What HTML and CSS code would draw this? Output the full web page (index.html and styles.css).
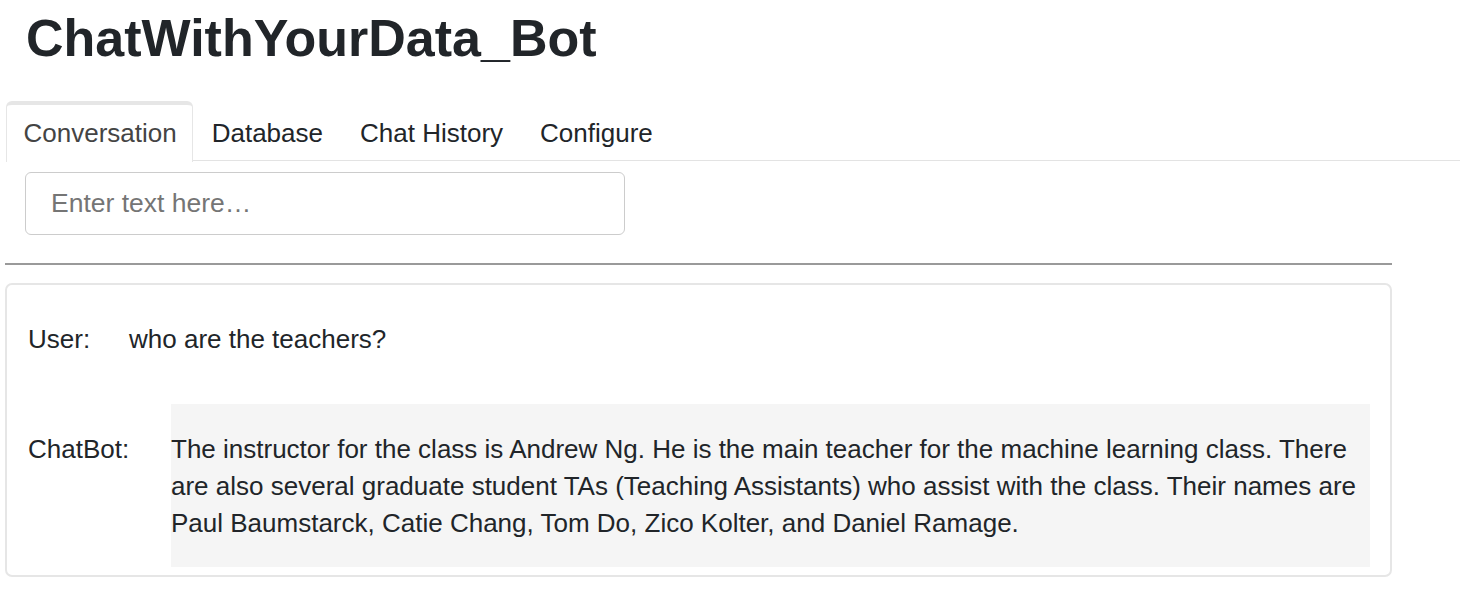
FILE: index.html
```html
<!DOCTYPE html>
<html>
<head>
<meta charset="utf-8">
<link rel="stylesheet" href="styles.css">
</head>
<body>
<h1 class="title">ChatWithYourData_Bot</h1>
<div class="tabs">
  <div class="tab active">Conversation</div>
  <div class="tab">Database</div>
  <div class="tab">Chat History</div>
  <div class="tab">Configure</div>
</div>
<div class="panel">
  <div class="input-wrap">
    <input class="input" type="text" placeholder="Enter text here…">
  </div>
  <div class="divider"></div>
  <div class="card">
    <div class="row user-row">
      <div class="label user-label">User:</div>
      <div class="msg">who are the teachers?</div>
    </div>
    <div class="row bot-row">
      <div class="label bot-label">ChatBot:</div>
      <div class="msg bot-msg">The instructor for the class is Andrew Ng. He is the main teacher for the machine learning class. There are also several graduate student TAs (Teaching Assistants) who assist with the class. Their names are Paul Baumstarck, Catie Chang, Tom Do, Zico Kolter, and Daniel Ramage.</div>
    </div>
  </div>
</div>
</body>
</html>
```
FILE: styles.css
```css
html, body {
  margin: 0;
  padding: 0;
  background: #ffffff;
  font-family: "Liberation Sans", Arial, sans-serif;
  color: #212529;
}
body {
  width: 1460px;
  height: 603px;
  overflow: hidden;
}
.title {
  margin: 0;
  padding: 7px 0 0 26px;
  height: 93px;
  box-sizing: border-box;
  font-size: 52px;
  font-weight: bold;
  line-height: 62px;
  color: #212529;
}
.tabs {
  display: flex;
  margin-left: 6px;
  margin-top: 8px;
  height: 60px;
  box-sizing: border-box;
  border-bottom: 1.5px solid #e3e3e3;
}
.tab {
  font-size: 26px;
  line-height: 56px;
  padding: 0 17.5px;
  color: #212529;
  border: 1.5px solid transparent;
  border-top-width: 4px;
  border-bottom: none;
}
.tab.active {
  padding: 0 15.5px 0 16.5px;
  color: #444;
  border-color: #e6e6e6;
  border-radius: 6px 6px 0 0;
  background: #fff;
  margin-bottom: -1.5px;
}
.panel {
  display: flex;
  flex-direction: column;
  padding-left: 5px;
  width: 1387px;
}
.input-wrap {
  padding: 11px 0 0 20px;
}
.input {
  display: block;
  width: 600px;
  height: 63px;
  box-sizing: border-box;
  border: 1.5px solid #cccccc;
  border-radius: 6px;
  padding: 0 0 0 25px;
  font-family: "Liberation Sans", Arial, sans-serif;
  font-size: 26.5px;
  color: #212529;
  outline: none;
}
.input::placeholder {
  color: #757575;
}
.divider {
  margin-top: 28px;
  height: 2px;
  background: #9a9a9a;
}
.card {
  margin-top: 18px;
  height: 294px;
  box-sizing: border-box;
  border: 2px solid #e6e6e6;
  border-radius: 7px;
  padding: 0 20px 0 21px;
}
.row {
  display: flex;
  font-size: 26px;
  line-height: 37px;
}
.user-row {
  margin-top: 36px;
  height: 83px;
}
.bot-row {
  margin-top: 0;
}
.label {
  flex: none;
}
.user-label {
  width: 101px;
}
.bot-label {
  width: 143px;
  padding-top: 27px;
}
.msg {
  color: #212529;
}
.bot-msg {
  flex: 1;
  background: #f5f5f5;
  padding: 27px 12px 24px 0;
  height: 163px;
  box-sizing: border-box;
}
```
